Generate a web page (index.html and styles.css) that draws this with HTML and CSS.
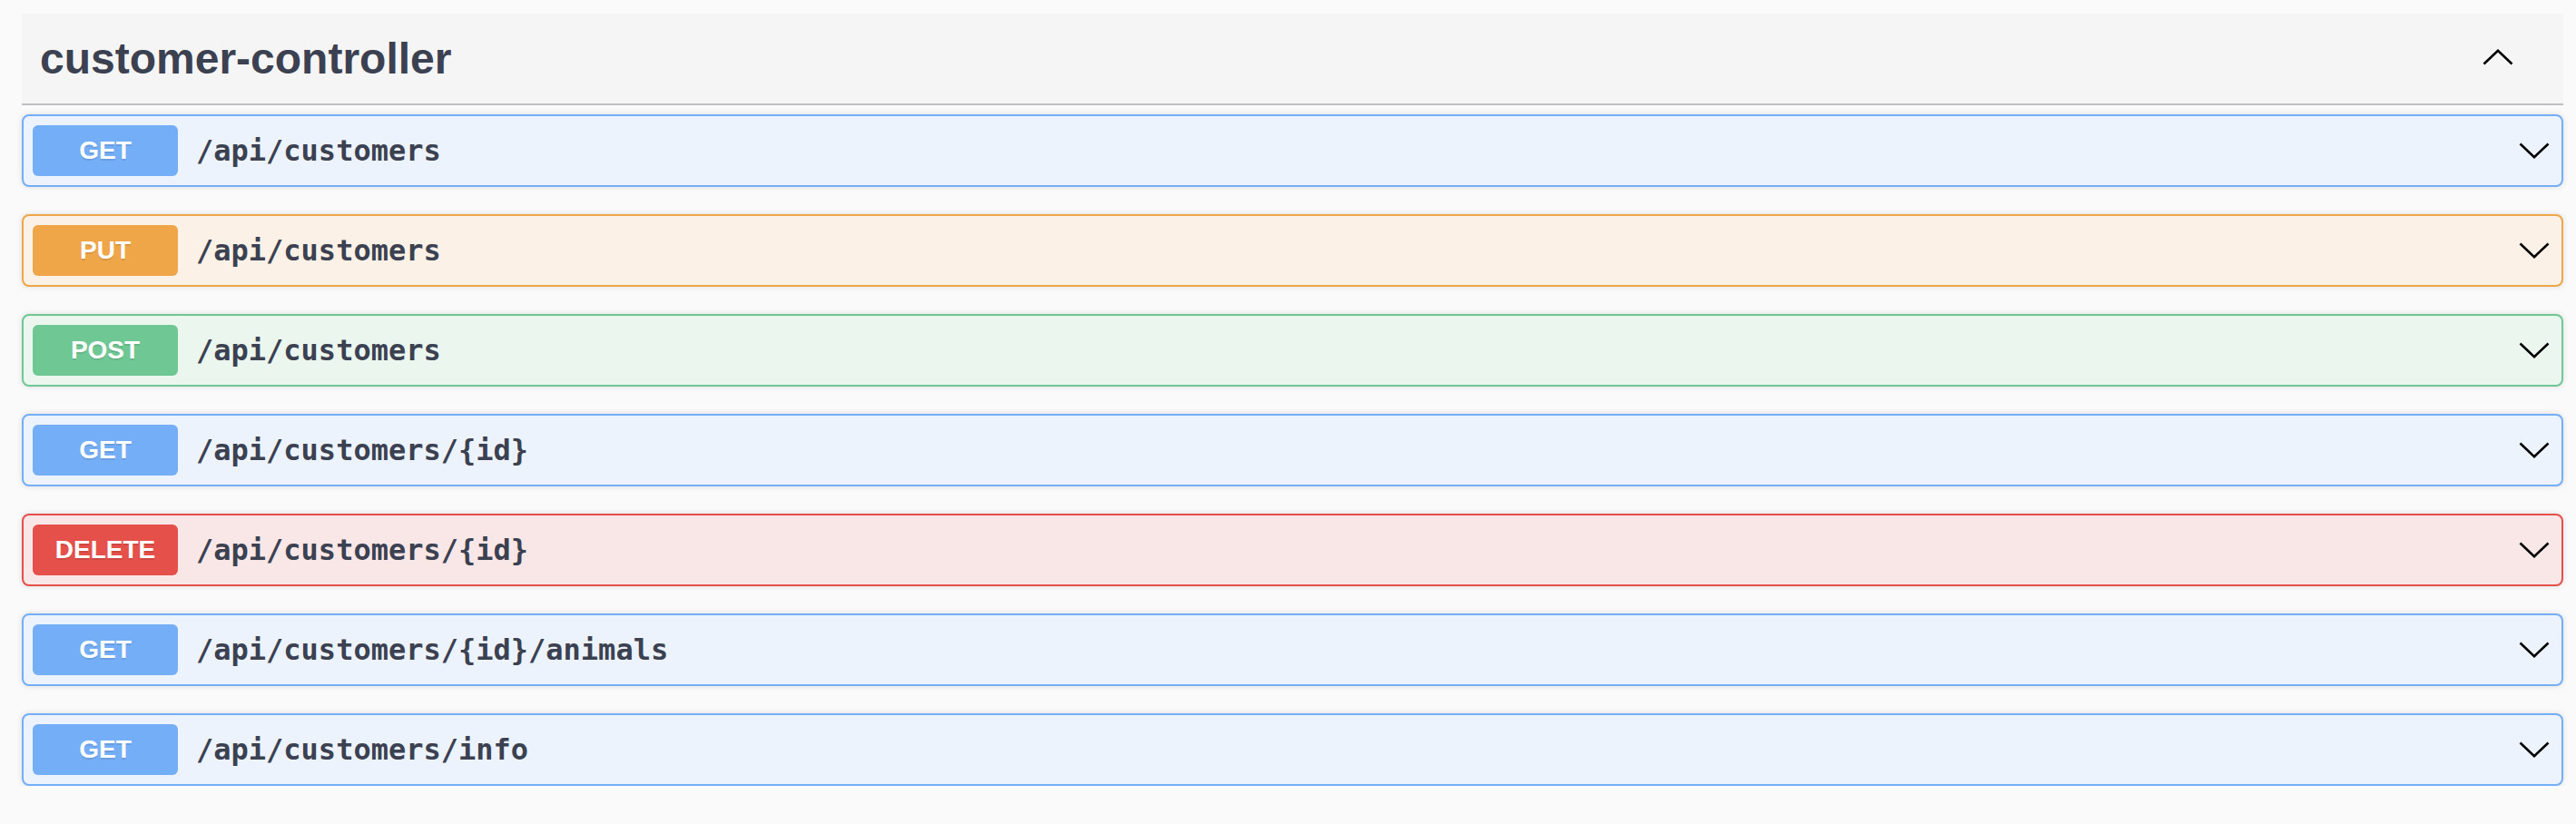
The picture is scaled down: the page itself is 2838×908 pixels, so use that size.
FILE: index.html
```html
<!DOCTYPE html>
<html lang="en">
<head>
<meta charset="utf-8">
<title>customer-controller</title>
<link rel="stylesheet" href="styles.css">
</head>
<body>
<div class="page">
  <section class="tag-section">
    <h3 class="tag-header">
      <span class="tag-title">customer-controller</span>
      <svg class="tag-arrow" width="34" height="18" viewBox="0 0 34 18" aria-hidden="true"><polyline points="1.5,16.5 17,1.8 32.5,16.5" /></svg>
    </h3>
    <div class="ops">
      <div class="opblock get">
        <span class="method">GET</span>
        <span class="path">/api/customers</span>
        <svg class="op-arrow" width="34" height="18" viewBox="0 0 34 18" aria-hidden="true"><polyline points="1.5,1.5 17,16.2 32.5,1.5" /></svg>
      </div>
      <div class="opblock put">
        <span class="method">PUT</span>
        <span class="path">/api/customers</span>
        <svg class="op-arrow" width="34" height="18" viewBox="0 0 34 18" aria-hidden="true"><polyline points="1.5,1.5 17,16.2 32.5,1.5" /></svg>
      </div>
      <div class="opblock post">
        <span class="method">POST</span>
        <span class="path">/api/customers</span>
        <svg class="op-arrow" width="34" height="18" viewBox="0 0 34 18" aria-hidden="true"><polyline points="1.5,1.5 17,16.2 32.5,1.5" /></svg>
      </div>
      <div class="opblock get">
        <span class="method">GET</span>
        <span class="path">/api/customers/{id}</span>
        <svg class="op-arrow" width="34" height="18" viewBox="0 0 34 18" aria-hidden="true"><polyline points="1.5,1.5 17,16.2 32.5,1.5" /></svg>
      </div>
      <div class="opblock delete">
        <span class="method">DELETE</span>
        <span class="path">/api/customers/{id}</span>
        <svg class="op-arrow" width="34" height="18" viewBox="0 0 34 18" aria-hidden="true"><polyline points="1.5,1.5 17,16.2 32.5,1.5" /></svg>
      </div>
      <div class="opblock get">
        <span class="method">GET</span>
        <span class="path">/api/customers/{id}/animals</span>
        <svg class="op-arrow" width="34" height="18" viewBox="0 0 34 18" aria-hidden="true"><polyline points="1.5,1.5 17,16.2 32.5,1.5" /></svg>
      </div>
      <div class="opblock get">
        <span class="method">GET</span>
        <span class="path">/api/customers/info</span>
        <svg class="op-arrow" width="34" height="18" viewBox="0 0 34 18" aria-hidden="true"><polyline points="1.5,1.5 17,16.2 32.5,1.5" /></svg>
      </div>
    </div>
  </section>
</div>
</body>
</html>
```

FILE: styles.css
```css
* { box-sizing: border-box; }

html, body {
  margin: 0;
  padding: 0;
  background: #fafafa;
}

.page {
  padding: 15px 14px 0 24px;
}

.tag-header {
  margin: 0 0 10px 0;
  height: 101px;
  display: flex;
  align-items: center;
  justify-content: space-between;
  padding: 0 55px 0 20px;
  background: #f5f5f5;
  border-bottom: 2px solid #bfc0c5;
  font-family: "Liberation Sans", Arial, sans-serif;
  font-weight: 700;
  font-size: 48px;
  color: #3b4151;
}

.tag-title {
  line-height: 55px;
}

.tag-arrow {
  display: block;
  margin-top: -4px;
}

.tag-arrow polyline,
.op-arrow polyline {
  fill: none;
  stroke: #000;
  stroke-width: 2.6;
  stroke-linejoin: miter;
}

.ops {
  display: flex;
  flex-direction: column;
  gap: 30px;
}

.opblock {
  height: 80px;
  display: flex;
  align-items: center;
  padding: 0 13px 0 10px;
  border: 2px solid;
  border-radius: 8px;
  box-shadow: 0 0 6px rgba(0, 0, 0, 0.12);
}

.method {
  flex: none;
  width: 160px;
  height: 56px;
  display: flex;
  align-items: center;
  justify-content: center;
  border-radius: 6px;
  color: #fff;
  font-family: "Liberation Sans", Arial, sans-serif;
  font-weight: 700;
  font-size: 28px;
  text-shadow: 0 2px 0 rgba(0, 0, 0, 0.1);
}

.path {
  flex: 1;
  padding: 0 20px;
  font-family: "DejaVu Sans Mono", "Liberation Mono", monospace;
  font-weight: 700;
  font-size: 32px;
  color: #3b4151;
}

.op-arrow {
  flex: none;
  display: block;
}

.get { background: #ecf3fc; border-color: #74aef7; }
.get .method { background: #74aef7; }

.put { background: #fbf1e6; border-color: #eea649; }
.put .method { background: #eea649; }

.post { background: #ebf6ef; border-color: #6fc794; }
.post .method { background: #6fc794; }

.delete { background: #f9e7e7; border-color: #e5504b; }
.delete .method { background: #e5504b; }
```
